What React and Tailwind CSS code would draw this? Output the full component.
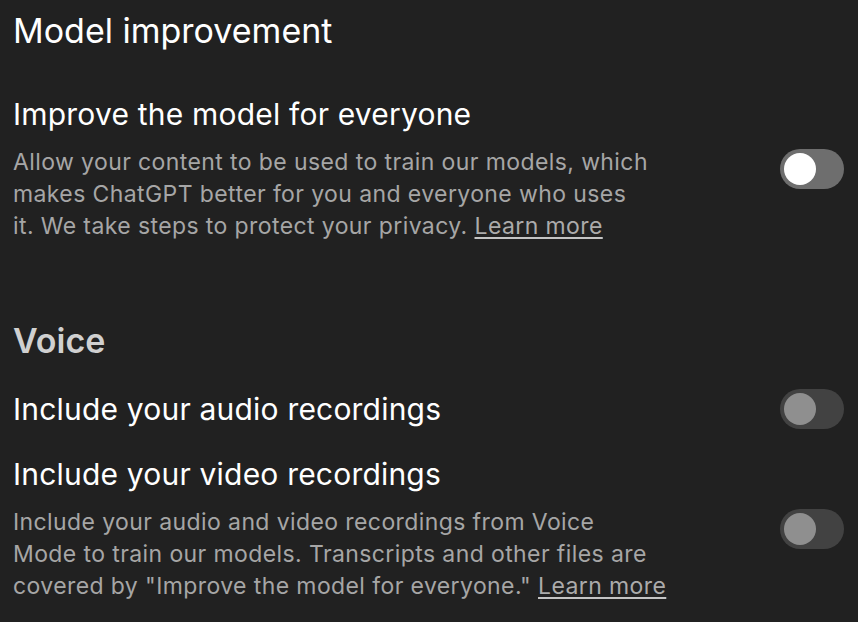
import React from "react"

const Toggle = ({ on, disabled }) => {
  const track = disabled ? "bg-[#424242]" : "bg-[#6e6e6e]"
  const knob = disabled ? "bg-[#8f8f8f]" : "bg-white"
  return (
    <div className={`w-[64px] h-[40px] rounded-full ${track} flex items-center px-[4px] ${on ? "justify-end" : "justify-start"} shrink-0`}>
      <div className={`w-[32px] h-[32px] rounded-full ${knob}`}></div>
    </div>
  )
}

const LearnMore = () => (
  <a href="#" className="text-[#ababab] underline underline-offset-[3px] decoration-[1.5px] decoration-[#c4c4c4]">Learn more</a>
)

export default function App() {
  return (
    <div className="min-h-screen w-full bg-[#212121] text-white pl-[13px] pr-[14px] font-['Inter','Noto_Sans',sans-serif]">
      <h1 className="text-[34px] leading-[40px] pt-[11px]">Model improvement</h1>

      <div className="flex items-start justify-between mt-[44px]">
        <div>
          <h2 className="text-[30px] leading-[38px] tracking-[0.2px]">Improve the model for everyone</h2>
          <p className="text-[23px] leading-[32px] text-[#a6a6a6] mt-[13px] whitespace-nowrap tracking-[0.4px]">
            Allow your content to be used to train our models, which<br />
            makes ChatGPT better for you and everyone who uses<br />
            it. We take steps to protect your privacy. <LearnMore />
          </p>
        </div>
        <div className="pt-[54px]">
          <Toggle />
        </div>
      </div>

      <h2 className="text-[34px] leading-[40px] font-semibold text-[#d0d0d0] mt-[79px]">Voice</h2>

      <div className="flex items-center justify-between h-[40px] mt-[28px]">
        <h3 className="text-[30px] leading-[38px] tracking-[0.2px]">Include your audio recordings</h3>
        <Toggle disabled />
      </div>

      <div className="flex items-start justify-between mt-[26px]">
        <div>
          <h3 className="text-[30px] leading-[38px] tracking-[0.2px]">Include your video recordings</h3>
          <p className="text-[23px] leading-[32px] text-[#a6a6a6] mt-[13px] whitespace-nowrap tracking-[0.4px]">
            Include your audio and video recordings from Voice<br />
            Mode to train our models. Transcripts and other files are<br />
            covered by "Improve the model for everyone." <LearnMore />
          </p>
        </div>
        <div className="pt-[54px]">
          <Toggle disabled />
        </div>
      </div>
    </div>
  )
}
